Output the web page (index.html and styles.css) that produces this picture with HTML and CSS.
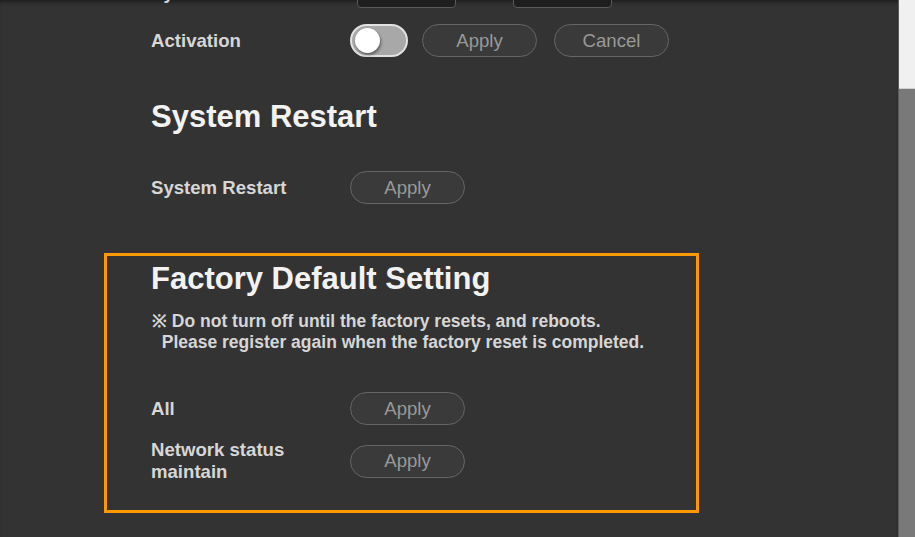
FILE: index.html
```html
<!DOCTYPE html>
<html lang="en">
<head>
    <meta charset="UTF-8">
    <meta name="viewport" content="width=device-width, initial-scale=1.0">
    <title>Maintenance</title>
    <link rel="stylesheet" href="styles.css">
</head>
<body>
    <div id="page">
        <div id="content">
            <!-- row scrolled out of view -->
            <div class="row row-cut">
                <span class="label">Sync</span>
                <span class="field">Trigger</span>
                <span class="field field-2">Trigger</span>
            </div>

            <div class="row">
                <span class="label">Activation</span>
                <span class="toggle"><span class="knob"></span></span>
                <button class="btn">Apply</button>
                <button class="btn btn-next">Cancel</button>
            </div>

            <h2 class="title">System Restart</h2>
            <div class="row row-restart">
                <span class="label">System Restart</span>
                <button class="btn">Apply</button>
            </div>

            <div id="factory">
                <h2 class="title">Factory Default Setting</h2>
                <p class="note">※ Do not turn off until the factory resets, and reboots.<br>&nbsp;&nbsp;Please register again when the factory reset is completed.</p>
                <div class="row row-all">
                    <span class="label">All</span>
                    <button class="btn">Apply</button>
                </div>
                <div class="row row-net">
                    <span class="label">Network status<br>maintain</span>
                    <button class="btn">Apply</button>
                </div>
            </div>
        </div>
    </div>
    <div id="scrollbar">
        <div class="track"></div>
        <div class="thumb"></div>
    </div>
</body>
</html>
```
FILE: styles.css
```css
html, body {
    margin: 0;
    height: 100%;
}

body {
    font-family: "Liberation Sans", Arial, sans-serif;
    background: #333333;
    display: flex;
    overflow: hidden;
}

#page {
    flex: 1;
    overflow: hidden;
    box-shadow: inset 0 4px 4px -2px rgba(0, 0, 0, 0.45);
}

#content {
    padding-left: 151px;
    margin-top: -22px;
}

.row {
    display: flex;
    align-items: center;
}

.label {
    width: 199px;
    flex-shrink: 0;
    color: #d6d6d6;
    font-size: 18.6px;
    font-weight: bold;
    line-height: 22px;
}

.field {
    width: 97px;
    height: 28px;
    margin-left: 7px;
    border: 1px solid #5a5a5a;
    border-radius: 4px;
    background: #1e1e1e;
    color: #ccc;
    font-size: 18px;
    text-align: center;
    line-height: 22px;
}

.field-2 {
    margin-left: 57px;
}

.row-cut {
    height: 30px;
}

.row-cut + .row {
    margin-top: 16px;
}

.toggle {
    width: 51px;
    height: 29px;
    border: 2px solid #e2e2e2;
    border-radius: 17px;
    background: #a8a8a8;
    display: flex;
    align-items: center;
    padding-left: 3px;
    box-sizing: content-box;
}

.knob {
    width: 25px;
    height: 25px;
    border-radius: 50%;
    background: #fff;
    box-shadow: 1px 2px 3px rgba(0, 0, 0, 0.45);
}

.btn {
    width: 115px;
    height: 33px;
    border: 1px solid #666;
    border-radius: 17px;
    background: #3a3a3a;
    color: #999;
    font-family: inherit;
    font-size: 18.6px;
    padding: 0;
}

.toggle + .btn {
    margin-left: 14px;
}

.btn-next {
    margin-left: 17px;
}

.title {
    margin: 0;
    color: #f2f2f2;
    font-size: 31px;
    font-weight: bold;
    line-height: 36px;
}

.row + .title {
    margin-top: 42px;
}

.row-restart {
    margin-top: 36px;
}

#factory {
    width: 501px;
    margin: 49px 0 0 -47px;
    padding: 5px 44px 27px 44px;
    border: 3px solid #ff9900;
}

.note {
    margin: 14px 0 0 1px;
    color: #d6d6d6;
    font-size: 17.5px;
    font-weight: bold;
    line-height: 21px;
}

.row-all {
    margin-top: 39px;
}

.row-net {
    margin-top: 14px;
}

#scrollbar {
    width: 16px;
    display: flex;
    flex-direction: column;
    border-left: 1px solid #5c5c5c;
}

.track {
    height: 88px;
    background: #f0f0f0;
    border-bottom: 1px solid #cfcfcf;
}

.thumb {
    flex: 1;
    background: #797979;
}
```
